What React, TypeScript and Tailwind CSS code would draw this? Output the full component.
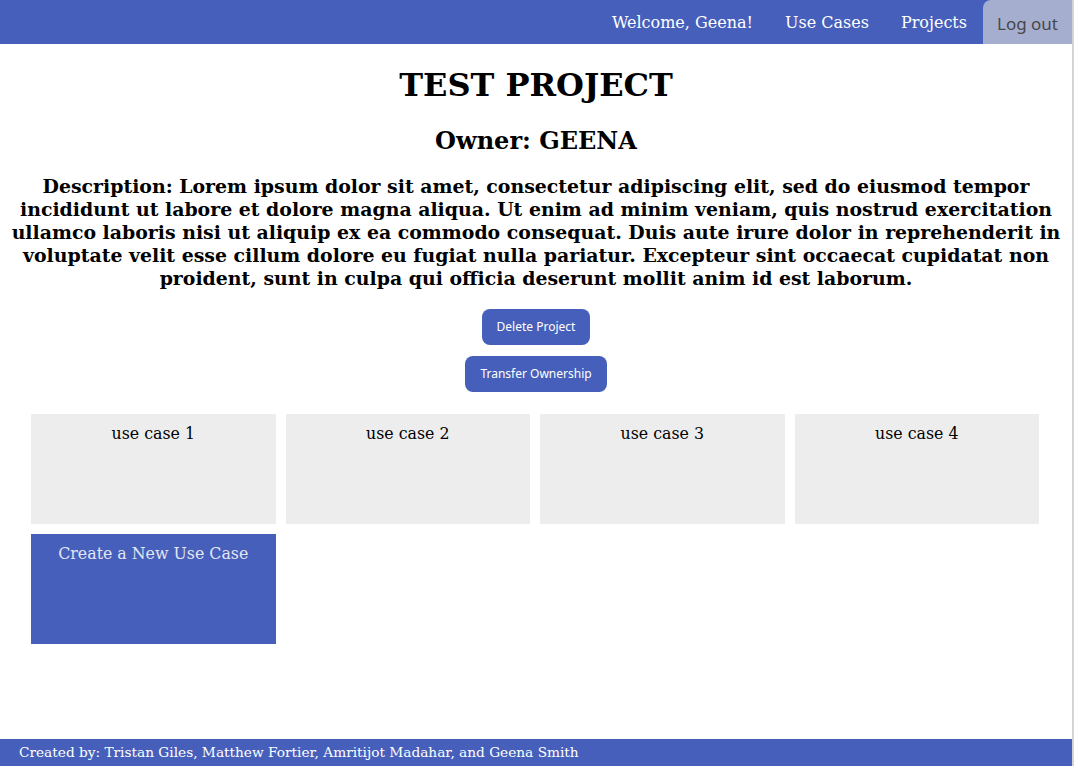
import React from "react";

const serif = { fontFamily: '"DejaVu Serif", serif' };

export default function App() {
  const cases = ["use case 1", "use case 2", "use case 3", "use case 4"];
  return (
    <div className="w-[1074px] min-h-[766px] flex flex-col bg-white border-r-2 border-[#d4d4d4]" style={serif}>
      <nav className="h-[44px] bg-[#465fba] flex justify-end items-stretch">
        <a className="px-4 flex items-center text-white text-[16px] pt-[1px]">Welcome, Geena!</a>
        <a className="px-4 flex items-center text-white text-[16px] pt-[1px]">Use Cases</a>
        <a className="px-4 flex items-center text-white text-[16px] pt-[1px]">Projects</a>
        <button
          className="w-[89px] bg-[#a6aed0] rounded-tl-[8px] text-[#474747] text-[17px] pt-[4px]"
          style={{ fontFamily: '"Noto Sans", sans-serif' }}
        >
          Log out
        </button>
      </nav>
      <main className="flex-1 flex flex-col">
        <h1 className="text-[32px] font-bold text-center mt-[23px] mb-[21px] leading-[1.164]">TEST PROJECT</h1>
        <h2 className="text-[24px] font-bold text-center mt-[2px] leading-[1.164]">Owner: GEENA</h2>
        <h3 className="text-[18.9px] font-bold text-center mt-[20px] px-[8px] leading-[23px]">
          Description: Lorem ipsum dolor sit amet, consectetur adipiscing elit, sed do eiusmod tempor incididunt ut labore et dolore magna aliqua. Ut enim ad minim veniam, quis nostrud exercitation ullamco laboris nisi ut aliquip ex ea commodo consequat. Duis aute irure dolor in reprehenderit in voluptate velit esse cillum dolore eu fugiat nulla pariatur. Excepteur sint occaecat cupidatat non proident, sunt in culpa qui officia deserunt mollit anim id est laborum.
        </h3>
        <div className="flex flex-col items-center gap-[11px] mt-[19px]" style={{ fontFamily: '"Noto Sans", sans-serif' }}>
          <button className="h-[36px] px-[15px] rounded-[8px] bg-[#465fba] text-white text-[12px]">Delete Project</button>
          <button className="h-[36px] px-[15px] rounded-[8px] bg-[#465fba] text-white text-[12px]">Transfer Ownership</button>
        </div>
        <div className="grid grid-cols-4 gap-[10px] pl-[31px] pr-[33px] mt-[22px]">
          {cases.map((c) => (
            <div key={c} className="h-[110px] bg-[#ededed] text-center text-[15.8px] text-black pt-[8px]">
              {c}
            </div>
          ))}
          <div className="h-[110px] bg-[#465fba] text-center text-[15.8px] text-[#e4e6f3] pt-[8px]">
            Create a New Use Case
          </div>
        </div>
      </main>
      <footer className="h-[27px] bg-[#465fba] text-white text-[13.7px] pl-[19px] flex items-center">
        Created by: Tristan Giles, Matthew Fortier, Amritijot Madahar, and Geena Smith
      </footer>
    </div>
  );
}
